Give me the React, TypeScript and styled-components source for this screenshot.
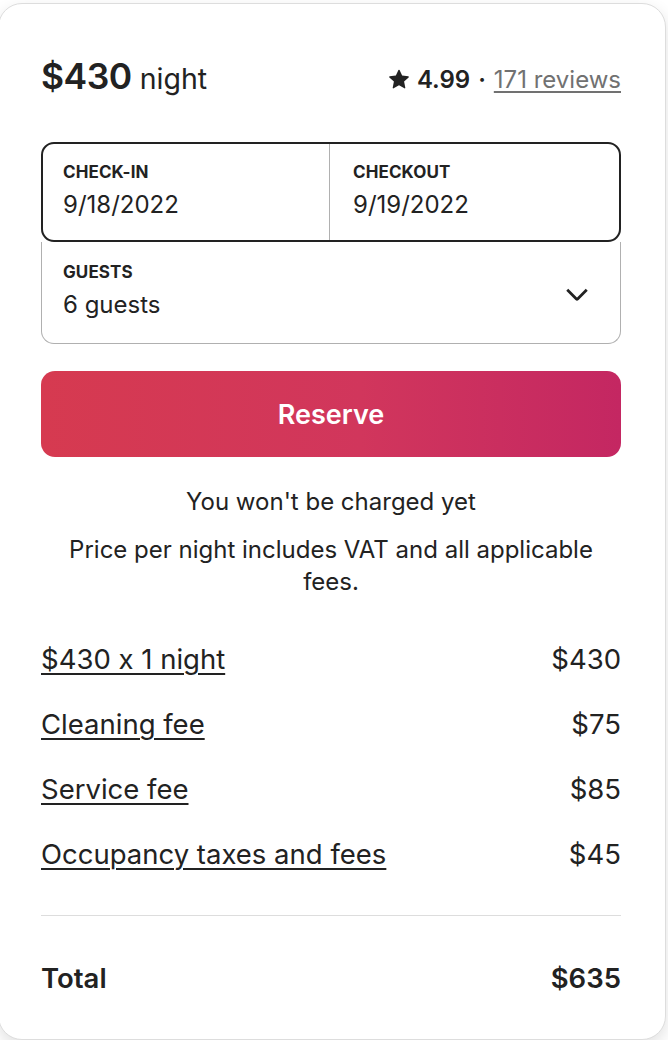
import React from "react";
import styled, { createGlobalStyle } from "styled-components";

const GlobalStyle = createGlobalStyle`
  * {
    box-sizing: border-box;
  }
  body {
    margin: 0;
    background-color: white;
    font-family: Inter, "Noto Sans", "Liberation Sans", sans-serif;
    font-feature-settings: "calt" 0;
    color: #222222;
    overflow: hidden;
  }
`;

const Card = styled.div`
  width: 668px;
  margin: 3px 0 0 -2px;
  padding: 51px 44px 44px 42px;
  border: 1px solid #dddddd;
  border-radius: 24px;
  background-color: white;
  box-shadow: rgba(0, 0, 0, 0.12) 0px 6px 16px;
`;

const Header = styled.div`
  display: flex;
  justify-content: space-between;
  align-items: baseline;
  height: 44px;
  margin-bottom: 43px;
`;

const Price = styled.div`
  display: flex;
  align-items: baseline;
  gap: 8px;
  .price-amount {
    font-size: 35.5px;
    font-weight: 600;
    letter-spacing: -0.5px;
  }
  .price-unit {
    font-size: 28.5px;
    font-weight: 400;
  }
`;

const Rating = styled.div`
  display: flex;
  align-items: center;
  gap: 8px;
  font-size: 24px;
  .rating-score {
    font-weight: 600;
  }
  .rating-dot {
    font-weight: 600;
  }
  .rating-reviews {
    color: #717171;
    text-decoration: underline;
    text-underline-offset: 3px;
  }
`;

const Picker = styled.div`
  display: flex;
  flex-direction: column;
`;

const DateRow = styled.div`
  display: flex;
  height: 100px;
  border: 2px solid #222222;
  border-radius: 13px;
`;

const Field = styled.div<{ $divider?: boolean }>`
  flex: 1;
  display: flex;
  flex-direction: column;
  padding: 18px 20px 0 ${(p) => (p.$divider ? "23px" : "20px")};
  border-left: ${(p) => (p.$divider ? "1px solid #b0b0b0" : "0")};
`;

const FieldLabel = styled.div`
  font-size: 17px;
  line-height: 20px;
  font-weight: 700;
  letter-spacing: 0.1px;
`;

const FieldValue = styled.div`
  margin-top: 8px;
  font-size: 24px;
  line-height: 30px;
`;

const GuestsRow = styled.div`
  display: flex;
  align-items: center;
  justify-content: space-between;
  height: 102px;
  padding: 0 30px 0 21px;
  border: 1px solid #b0b0b0;
  border-top: 0;
  border-radius: 0 0 13px 13px;
  .guests-text {
    display: flex;
    flex-direction: column;
    padding-bottom: 4px;
  }
`;

const ReserveButton = styled.button`
  width: 100%;
  height: 86px;
  margin-top: 27px;
  border: 0;
  border-radius: 14px;
  background: linear-gradient(to right, #d63a50 0%, #d1365c 55%, #c42762 100%);
  color: white;
  font-family: inherit;
  font-size: 27px;
  font-weight: 600;
  cursor: pointer;
`;

const Note = styled.p<{ $gap: number }>`
  margin: ${(p) => p.$gap}px 0 0;
  text-align: center;
  font-size: 24px;
  line-height: 32px;
`;

const Breakdown = styled.div`
  display: flex;
  flex-direction: column;
  gap: 32px;
  margin-top: 45px;
`;

const Line = styled.div`
  display: flex;
  justify-content: space-between;
  font-size: 27.5px;
  line-height: 33px;
  .line-label {
    text-decoration: underline;
    text-decoration-thickness: 1.5px;
    text-underline-offset: 4px;
  }
`;

const Divider = styled.hr`
  margin: 44px 0 46px;
  border: 0;
  border-top: 1px solid #dddddd;
`;

const Total = styled.div`
  display: flex;
  justify-content: space-between;
  font-size: 27.5px;
  line-height: 33px;
  font-weight: 600;
`;

const StarIcon = () => (
  <svg width="20" height="20" viewBox="0 0 32 32" fill="#222222">
    <path d="M15.094 1.579l-4.124 8.885-9.86 1.27a1 1 0 0 0-.542 1.736l7.293 6.565-1.965 9.852a1 1 0 0 0 1.483 1.061L16 25.951l8.625 4.997a1 1 0 0 0 1.482-1.06l-1.965-9.853 7.293-6.565a1 1 0 0 0-.541-1.735l-9.86-1.271-4.127-8.885a1 1 0 0 0-1.814 0z" />
  </svg>
);

const ChevronIcon = () => (
  <svg width="26" height="26" viewBox="0 0 32 32" fill="none" stroke="#222222" strokeWidth="3.4">
    <path d="M28 12 16.707 23.293a1 1 0 0 1-1.414 0L4 12" />
  </svg>
);

const fees = [
  { label: "$430 x 1 night", amount: "$430" },
  { label: "Cleaning fee", amount: "$75" },
  { label: "Service fee", amount: "$85" },
  { label: "Occupancy taxes and fees", amount: "$45" },
];

const App: React.FC = () => {
  return (
    <>
      <GlobalStyle />
      <Card>
        <Header>
          <Price>
            <span className="price-amount">$430</span>
            <span className="price-unit">night</span>
          </Price>
          <Rating>
            <StarIcon />
            <span className="rating-score">4.99</span>
            <span className="rating-dot">·</span>
            <span className="rating-reviews">171 reviews</span>
          </Rating>
        </Header>
        <Picker>
          <DateRow>
            <Field>
              <FieldLabel>CHECK-IN</FieldLabel>
              <FieldValue>9/18/2022</FieldValue>
            </Field>
            <Field $divider>
              <FieldLabel>CHECKOUT</FieldLabel>
              <FieldValue>9/19/2022</FieldValue>
            </Field>
          </DateRow>
          <GuestsRow>
            <div className="guests-text">
              <FieldLabel>GUESTS</FieldLabel>
              <FieldValue>6 guests</FieldValue>
            </div>
            <ChevronIcon />
          </GuestsRow>
        </Picker>
        <ReserveButton type="button">Reserve</ReserveButton>
        <Note $gap={29}>You won't be charged yet</Note>
        <Note $gap={16}>Price per night includes VAT and all applicable fees.</Note>
        <Breakdown>
          {fees.map((fee) => (
            <Line key={fee.label}>
              <span className="line-label">{fee.label}</span>
              <span>{fee.amount}</span>
            </Line>
          ))}
        </Breakdown>
        <Divider />
        <Total>
          <span>Total</span>
          <span>$635</span>
        </Total>
      </Card>
    </>
  );
};

export default App;
